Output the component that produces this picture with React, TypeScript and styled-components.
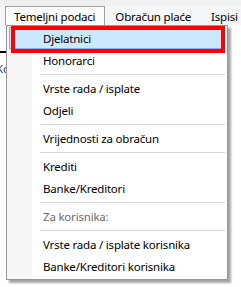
import React from "react";
import styled, { createGlobalStyle } from "styled-components";

const GlobalStyle = createGlobalStyle`
	body {
		margin: 0;
		background: #f0f0f0;
		font-family: "Segoe UI", "Noto Sans", "Open Sans", sans-serif;
		font-size: 11.5px;
		letter-spacing: -0.2px;
		color: #000;
	}
`;

const Frame = styled.div`
	position: relative;
	width: 241px;
	height: 287px;
	overflow: hidden;
	background: #f0f0f0;
	padding-top: 6px;
	box-sizing: border-box;
`;

const MenuBar = styled.div`
	display: flex;
	height: 19px;
	padding-left: 5px;
	background: #f5f6f7;
`;

const BarItem = styled.div<{ open?: boolean }>`
	display: flex;
	align-items: center;
	padding: 0 9px 0 8px;
	margin-right: 1px;
	white-space: nowrap;
	border: 1px solid ${(p) => (p.open ? "#a0a0a0" : "transparent")};
	border-bottom: none;
	background: ${(p) => (p.open ? "#fcfcfc" : "transparent")};
`;

const Content = styled.div`
	background: #fff;
	height: 262px;
	padding-top: 26px;
	box-sizing: border-box;
`;

const ToolLine = styled.div`
	width: 60px;
	height: 2px;
	background: #000;
`;

const CutText = styled.div`
	margin-top: 8px;
	color: #1d3d8a;
	margin-left: -4px;
`;

const Dropdown = styled.div`
	position: absolute;
	left: 6px;
	top: 25px;
	width: 222px;
	background: #fff;
	border: 1px solid #979797;
	box-sizing: border-box;
	padding: 1px 2px 2px 2px;
	box-shadow: 3px 3px 2px rgba(0, 0, 0, 0.35);
`;

const Gutter = styled.div`
	position: absolute;
	left: 0;
	top: 0;
	bottom: 0;
	width: 25px;
	background: #f7f7f7;
`;

const Item = styled.div<{ active?: boolean; disabled?: boolean }>`
	position: relative;
	height: 22px;
	display: flex;
	align-items: center;
	padding-left: 33px;
	box-sizing: border-box;
	white-space: nowrap;
	color: ${(p) => (p.disabled ? "#6d6d6d" : "#000")};
	background: ${(p) => (p.active ? "#cce8ff" : "transparent")};
	border: 1px solid ${(p) => (p.active ? "#7eb4ea" : "transparent")};
`;

const Separator = styled.div`
	position: relative;
	height: 6px;
	display: flex;
	align-items: center;
	padding-left: 31px;

	&::after {
		content: "";
		flex: 1;
		height: 1px;
		background: #d7d7d7;
	}
`;

const Highlight = styled.div`
	position: absolute;
	left: 4px;
	top: 0px;
	width: 214px;
	height: 27px;
	border: 4px solid #ff0000;
	box-sizing: border-box;
	pointer-events: none;
`;

type Entry = { label?: string; active?: boolean; disabled?: boolean };

const entries: Entry[] = [
	{ label: "Djelatnici", active: true },
	{ label: "Honorarci" },
	{},
	{ label: "Vrste rada / isplate" },
	{ label: "Odjeli" },
	{},
	{ label: "Vrijednosti za obračun" },
	{},
	{ label: "Krediti" },
	{ label: "Banke/Kreditori" },
	{},
	{ label: "Za korisnika:", disabled: true },
	{},
	{ label: "Vrste rada / isplate korisnika" },
	{ label: "Banke/Kreditori korisnika" },
];

const App = () => {
	return (
		<>
			<GlobalStyle />
			<Frame>
				<MenuBar>
					<BarItem open>Temeljni podaci</BarItem>
					<BarItem>Obračun plaće</BarItem>
					<BarItem>Ispisi</BarItem>
				</MenuBar>
				<Content>
					<ToolLine />
					<CutText>Ko</CutText>
				</Content>
				<Dropdown>
					<Gutter />
					{entries.map((e, i) =>
						e.label ? (
							<Item key={i} active={e.active} disabled={e.disabled}>
								{e.label}
							</Item>
						) : (
							<Separator key={i} />
						)
					)}
					<Highlight />
				</Dropdown>
			</Frame>
		</>
	);
};

export default App;
